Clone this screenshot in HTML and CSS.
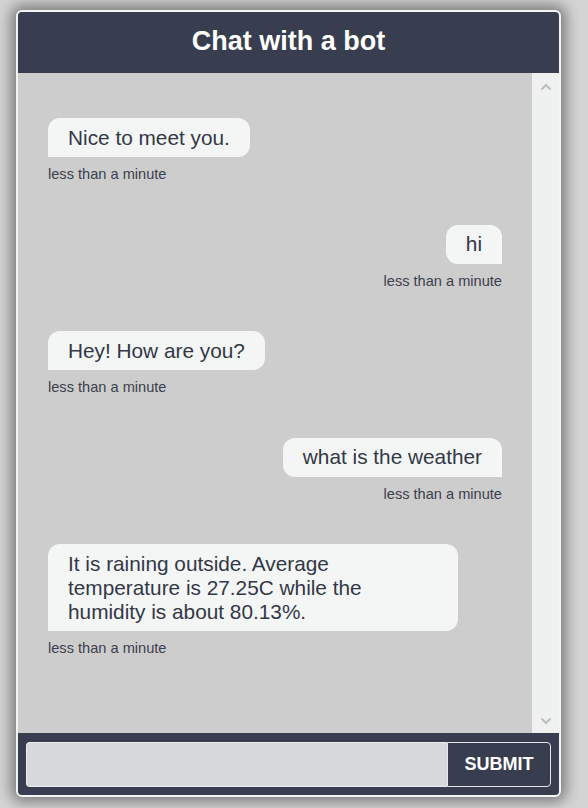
FILE: index.html
```html
<!DOCTYPE html>
<html>
<head>
<meta charset="utf-8">
<title>Chat with a bot</title>
<link rel="stylesheet" href="styles.css">
</head>
<body>
<div class="chat">
  <header class="chat-header">Chat with a bot</header>
  <div class="chat-body">
    <div class="messages">
      <div class="msg bot">
        <div class="bubble">Nice to meet you.</div>
        <div class="time">less than a minute</div>
      </div>
      <div class="msg user">
        <div class="bubble">hi</div>
        <div class="time">less than a minute</div>
      </div>
      <div class="msg bot">
        <div class="bubble">Hey! How are you?</div>
        <div class="time">less than a minute</div>
      </div>
      <div class="msg user">
        <div class="bubble">what is the weather</div>
        <div class="time">less than a minute</div>
      </div>
      <div class="msg bot">
        <div class="bubble">It is raining outside. Average temperature is 27.25C while the humidity is about 80.13%.</div>
        <div class="time">less than a minute</div>
      </div>
    </div>
    <div class="scrollbar">
      <svg class="arrow" width="14" height="10" viewBox="0 0 14 10"><path d="M2.5 7.5 L7 3 L11.5 7.5" fill="none" stroke="#bdbdbd" stroke-width="2"/></svg>
      <svg class="arrow" width="14" height="10" viewBox="0 0 14 10"><path d="M2.5 2.5 L7 7 L11.5 2.5" fill="none" stroke="#bdbdbd" stroke-width="2"/></svg>
    </div>
  </div>
  <form class="chat-footer">
    <input class="input" type="text">
    <button class="submit" type="button">SUBMIT</button>
  </form>
</div>
</body>
</html>
```

FILE: styles.css
```css
* { box-sizing: border-box; }

html, body {
  margin: 0;
  padding: 0;
}

body {
  background: #d4d4d4;
  font-family: "Liberation Sans", Arial, sans-serif;
  padding-top: 10px;
  height: 808px;
  overflow: hidden;
}

.chat {
  margin-left: 16px;
  width: 545px;
  height: 787px;
  border: 2px solid #f3f4f4;
  border-radius: 6px;
  overflow: hidden;
  display: flex;
  flex-direction: column;
  background: #cdcdcd;
  box-shadow: 0 0 14px 5px rgba(0, 0, 0, 0.42);
}

.chat-header {
  height: 61px;
  flex: none;
  background: #383e4f;
  color: #ffffff;
  font-weight: bold;
  font-size: 27px;
  display: flex;
  align-items: center;
  justify-content: center;
  padding-bottom: 2px;
}

.chat-body {
  flex: 1;
  display: flex;
  min-height: 0;
}

.messages {
  flex: 1;
  padding: 45px 30px 0;
  display: flex;
  flex-direction: column;
  gap: 41.5px;
  background: #cdcdcd;
}

.msg {
  display: flex;
  flex-direction: column;
}

.msg.bot { align-items: flex-start; }
.msg.user { align-items: flex-end; }

.bubble {
  background: #f4f6f6;
  color: #333846;
  font-size: 20.8px;
  line-height: 24px;
  padding: 7.5px 20px;
  max-width: 410px;
}

.bot .bubble { border-radius: 12px 12px 12px 0; }
.user .bubble { border-radius: 12px 12px 0 12px; }

.time {
  margin-top: 9px;
  font-size: 14.6px;
  line-height: 17px;
  color: #3b404c;
}

.scrollbar {
  width: 27px;
  flex: none;
  background: #eff0f0;
  display: flex;
  flex-direction: column;
  justify-content: space-between;
  align-items: center;
  padding: 9px 0 7px;
}

.arrow { display: block; }

.chat-footer {
  flex: none;
  height: 62px;
  margin: 0;
  background: #383e4f;
  padding: 9px 8px 8px 8px;
  display: flex;
}

.input {
  flex: 1;
  height: 45px;
  background: #d7d8dc;
  border: 1px solid #eceded;
  border-right: none;
  border-radius: 4px 0 0 4px;
  margin: 0;
  outline: none;
}

.submit {
  width: 104px;
  height: 45px;
  margin: 0;
  background: #383e4f;
  color: #ffffff;
  font-family: "Liberation Sans", Arial, sans-serif;
  font-weight: bold;
  font-size: 18px;
  border: 1px solid #e6e7e8;
  border-radius: 0 4px 4px 0;
  padding: 0;
}
```
